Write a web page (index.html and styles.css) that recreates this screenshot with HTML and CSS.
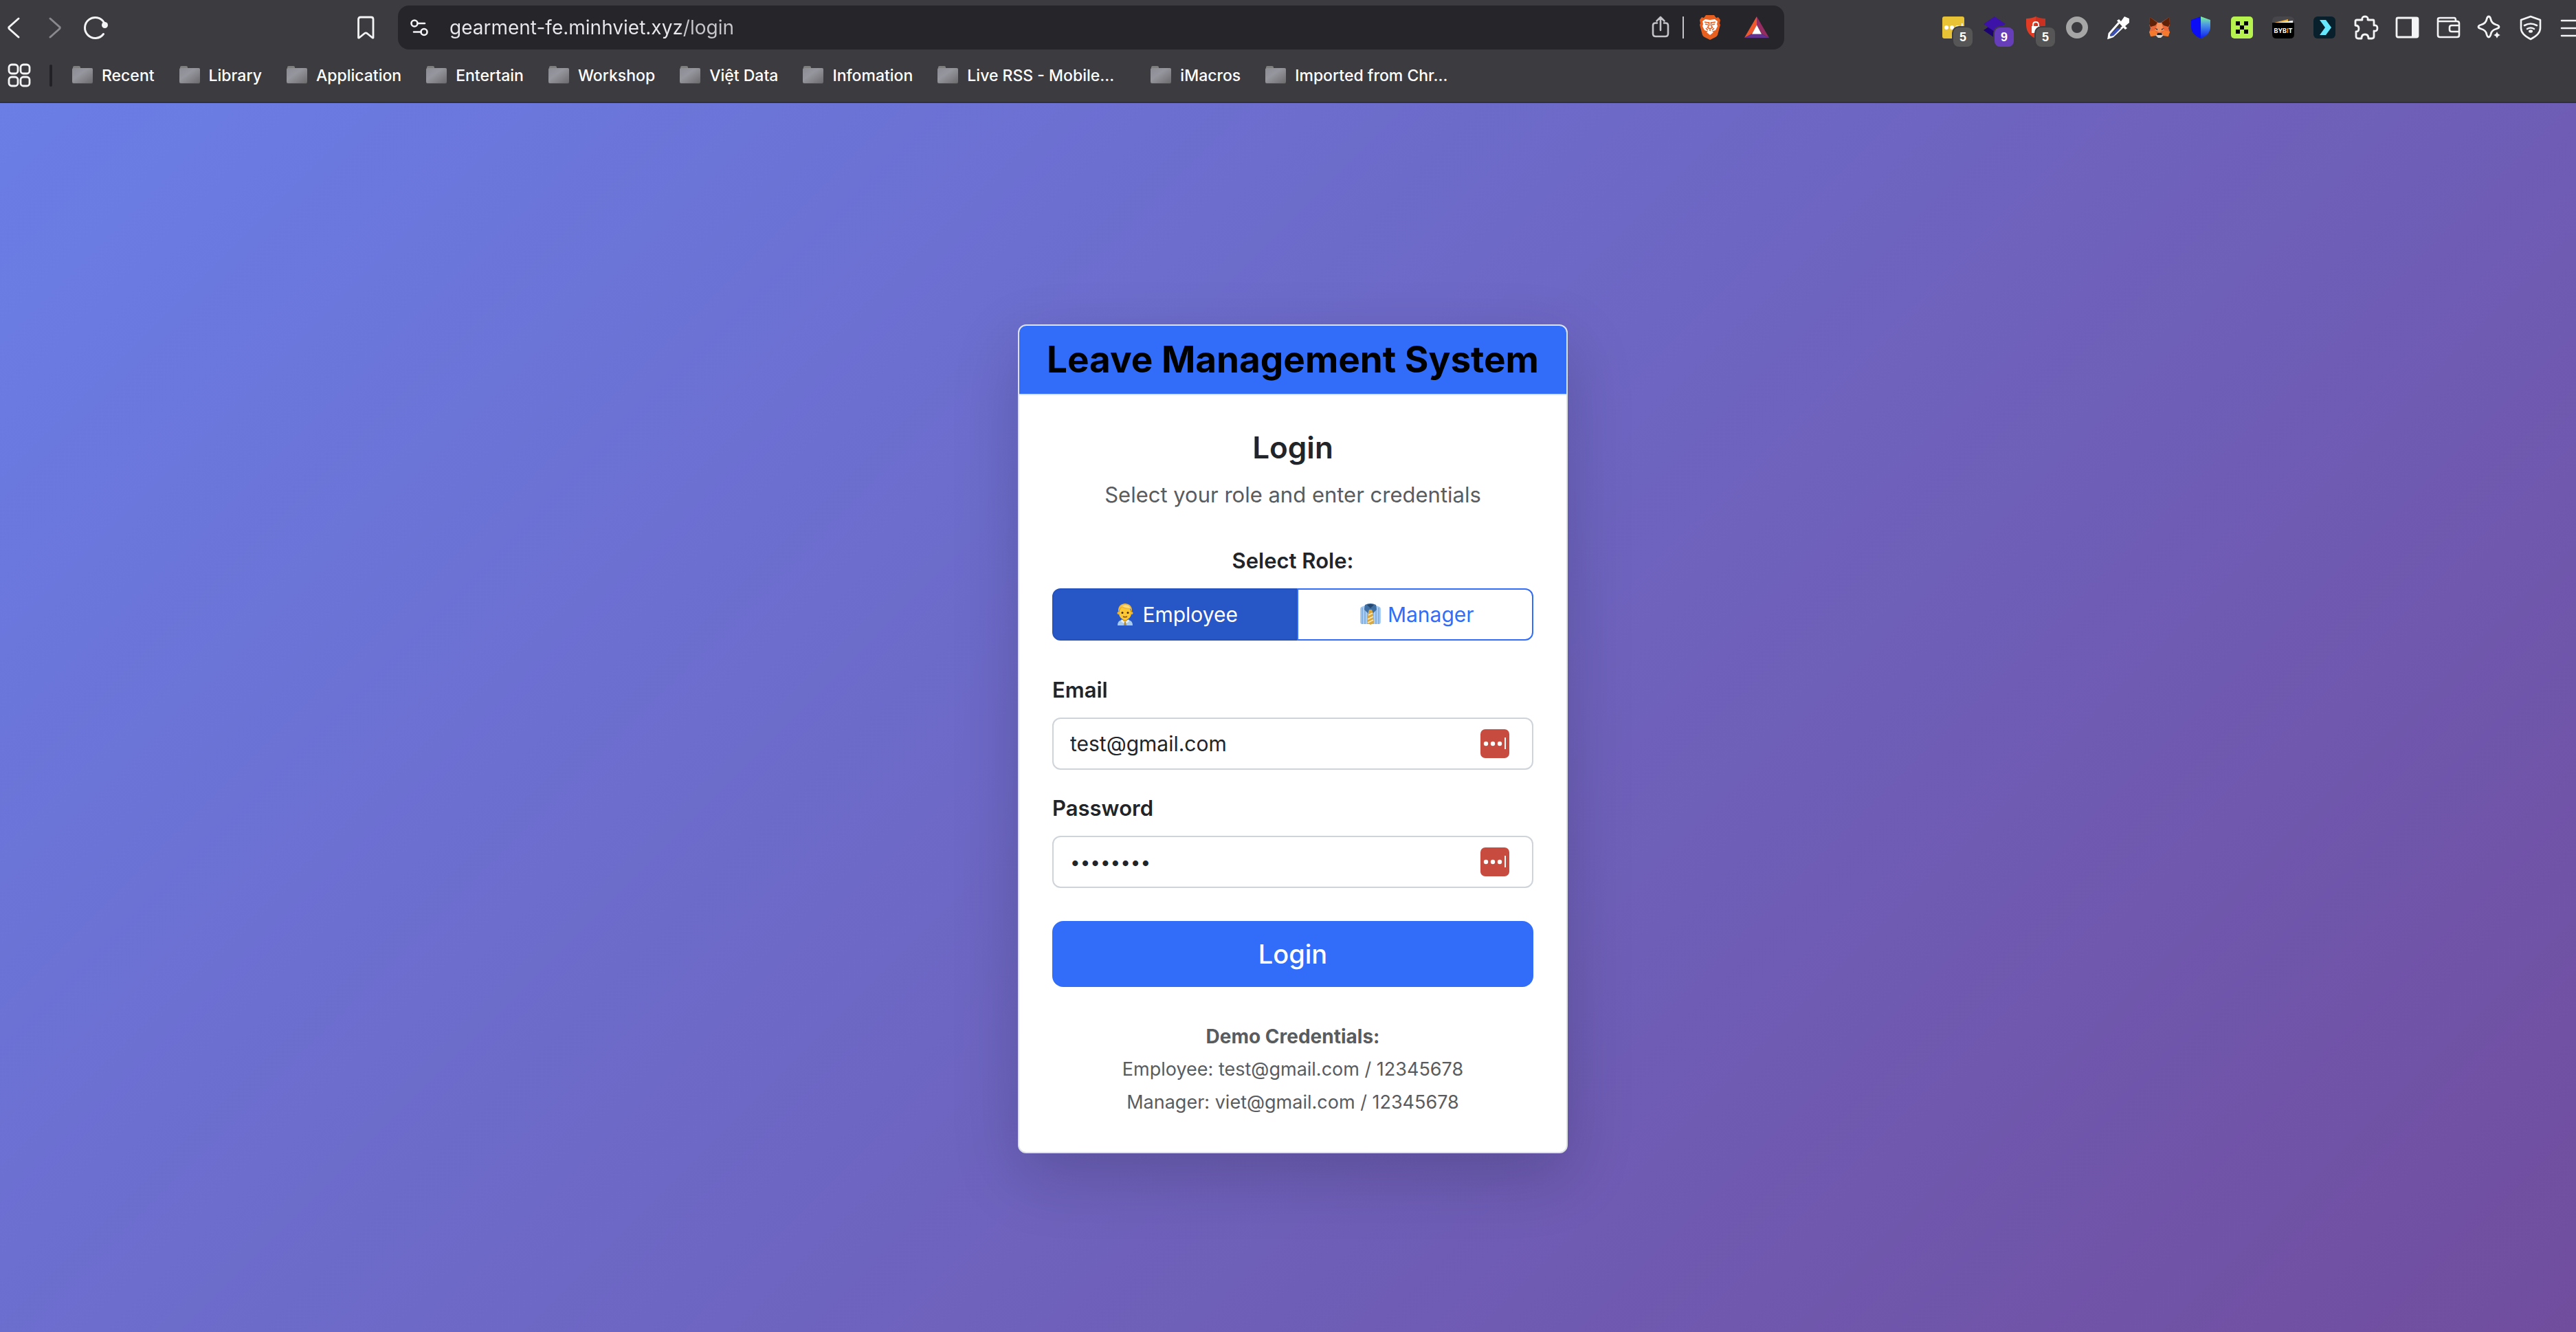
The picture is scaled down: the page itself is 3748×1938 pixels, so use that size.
FILE: index.html
```html
<!DOCTYPE html>
<html lang="en">
<head>
<meta charset="utf-8">
<title>Leave Management System</title>
<link rel="stylesheet" href="styles.css">
</head>
<body>
<svg class="defs" aria-hidden="true">
  <defs>
    <linearGradient id="folder-fill" x1="0" y1="0" x2="1" y2="1"><stop offset="0" stop-color="#8b8b93"/><stop offset=".4" stop-color="#96969e"/><stop offset="1" stop-color="#6c6c6e"/></linearGradient>
    <linearGradient id="shield-fill" x1="0" y1="0" x2="0" y2="1"><stop offset="0" stop-color="#7df59a"/><stop offset=".35" stop-color="#4f9ee0"/><stop offset="1" stop-color="#0a1cf5"/></linearGradient>
    <symbol id="folder" viewBox="0 0 30 30">
      <path d="M1 3q0-2 2-2h7q2 0 2 2v3H1z" fill="#7e7e7e"/>
      <rect y="4" width="30" height="23" rx="2" fill="#4f4f51"/>
      <rect y="4" width="30" height="22" rx="2" fill="url(#folder-fill)"/>
    </symbol>
    <symbol id="pass-fill" viewBox="0 0 42 42">
      <rect width="42" height="42" rx="7" fill="#c74b3e"/>
      <g fill="#fff"><circle cx="8" cy="21" r="3.2"/><circle cx="18" cy="21" r="3.2"/><circle cx="28" cy="21" r="3.2"/><rect x="35" y="12" width="2" height="17"/></g>
    </symbol>
  </defs>
</svg>

<header class="browser">
  <div class="toolbar">
    <nav class="nav" aria-label="Navigation">
      <button class="icon-button" type="button" aria-label="Back"><svg class="icon" viewBox="0 0 32 32"><path class="line" d="M23 3 9.500 15Q8 16 9.500 18L23 30" stroke-width="3"/></svg></button>
      <button class="icon-button dim" type="button" aria-label="Forward"><svg class="icon" viewBox="0 0 32 32"><path class="line" d="M9 3 22.500 15Q24 16 22.500 18L9 30" stroke-width="3"/></svg></button>
      <button class="icon-button" type="button" aria-label="Reload"><svg class="icon" viewBox="0 0 32 32"><path class="line" d="M26.500 25.500A15 15 0 1 1 27.500 9" stroke-width="3"/><circle cx="28.500" cy="12.500" r="4.500" fill="currentColor"/></svg></button>
    </nav>
    <button class="icon-button bookmark-button" type="button" aria-label="Bookmark this page"><svg class="icon" viewBox="0 0 32 32"><path class="line" d="M5.500 4Q5.500 1 8.500 1H24q3 0 3 3v27l-1 0-8-6.500q-1.800-1.300-3.500 0L6.500 31l-1 0z" stroke-width="2.800"/></svg></button>
    <div class="address">
      <button class="icon-button" type="button" aria-label="Site settings"><svg class="icon" viewBox="0 0 32 32"><g class="line" stroke-width="2.600"><circle cx="9" cy="10" r="4.500"/><path d="M13.500 10H24M8 22.500H18.500"/><circle cx="23" cy="22.500" r="4.500"/></g></svg></button>
      <input class="url" type="text" aria-label="Address" value="gearment-fe.minhviet.xyz/login">
      <button class="icon-button share" type="button" aria-label="Share"><svg class="icon" viewBox="0 0 32 32"><path class="line" d="M11 9.500H8.500q-3.500 0-3.500 3.500v12q0 4 4 4h14q4 0 4-4V13q0-3.500-3.500-3.500H21M16 20V1.500M10.500 6.500 16 1l5.500 5.500" stroke-width="2.600"/></svg></button>
      <span class="address-rule"></span>
      <button class="icon-button" type="button" aria-label="Brave Shields"><svg class="icon" viewBox="0 2 32 32">
        <path d="M10 0h12l3 4 3-1 3 4-1 5 1 2-4 15q-1 2-3 3l-8 4-8-4q-2-1-3-3L1 14l1-2-1-5 3-4 3 1z" fill="#e8601f"/>
        <path d="M5 9l4-3 7 1 7-1 4 3-1 4 1 3-3 6-3 1-5 2-5-2-3-1-3-6 1-3zM11 25l5-3 5 3-5 4z" fill="#fff"/>
        <path d="M8 10l6 1M24 10l-6 1M14.500 10v5l-2 3 3.500 2 3.500-2-2-3v-5M9 13l4 1M23 13l-4 1M16 20v3M10 19l3 3M22 19l-3 3" fill="none" stroke="#e8601f" stroke-width="1.600"/>
      </svg></button>
      <button class="icon-button rewards" type="button" aria-label="Brave Rewards"><svg class="icon" viewBox="0 0 32 32"><path d="M16 0-2 31 9 25 16 13z" fill="#f0582c"/><path d="M16 0 34 31 23 25 16 13z" fill="#952d63"/><path d="M-2 31H34L23 25H9z" fill="#61328f"/><path d="M16 12.500 9 25.500h14z" fill="#fff"/></svg></button>
    </div>
    <div class="extensions">
      <button class="icon-button" type="button" aria-label="Password manager"><svg class="icon" viewBox="0 0 32 32"><rect width="32" height="32" rx="3" fill="#e9c336"/><g fill="#fff"><circle cx="6" cy="16" r="3"/><circle cx="14" cy="16" r="3"/><circle cx="22" cy="16" r="3"/><rect x="28" y="10" width="1.500" height="12"/></g></svg><span class="badge">5</span></button>
      <button class="icon-button" type="button" aria-label="Layers"><svg class="icon" viewBox="0 0 32 32"><path d="M0 20 16 9 32 20 16 31z" fill="#1c0273"/><path d="M0 11 16 0 32 11 16 22z" fill="#3d12a8"/></svg><span class="badge violet">9</span></button>
      <button class="icon-button" type="button" aria-label="Privacy lock"><svg class="icon" viewBox="0 0 32 32"><path d="M2 3q8 0 14-3v32Q2 26 2 12z" fill="#e23b24"/><path d="M30 3q-8 0-14-3v32q14-6 14-20z" fill="#cb3120"/><rect x="10" y="14" width="12" height="10" fill="#fff"/><path d="M12 14v-2q0-4 4-4t4 4v2" fill="none" stroke="#fff" stroke-width="1.800"/></svg><span class="badge">5</span></button>
      <button class="icon-button" type="button" aria-label="Recorder"><svg class="icon" viewBox="0 0 32 32"><circle cx="16" cy="16" r="12" fill="none" stroke="#a6a6a6" stroke-width="8"/></svg></button>
      <button class="icon-button" type="button" aria-label="Colour picker"><svg class="icon" viewBox="0 0 32 32"><path d="M17 9 3 25l-1 6 6-2L23 15" fill="#3d3c40" stroke="#fff" stroke-width="3"/><path d="M14 17h6L9 28l-4 1-1-2z" fill="#3a50b8"/><path d="M14 6l3-2 3 3 5-7 7 3v6l-6 5 3 3-3 2z" fill="#fff"/></svg></button>
      <button class="icon-button" type="button" aria-label="Fox wallet"><svg class="icon" viewBox="0 0 32 32"><path d="M2 1 14 9h4L30 1l1 11-2 5 2 6-3 6-7-2-3 3h-4l-3-3-7 2-3-6 2-6-2-5z" fill="#e8683a"/><path d="M2 1 13 9 10 13 3 15 1 11zM30 1 19 9l3 4 7 2 2-4z" fill="#5e2209"/><path d="M13 9h6l2 8 2 3-7 3-7-3 2-3z" fill="#f5935f"/><path d="M1 22l8-2 3 4-1 4-8 1zM31 22l-8-2-3 4 1 4 8 1z" fill="#f57a2e"/><path d="M12 25h8l1 3-3 3h-4l-3-3z" fill="#d9d5d2"/><path d="M13 24h6l1 3h-8zM9 17l4 1v2zM23 17l-4 1v2z" fill="#26211f"/></svg></button>
      <button class="icon-button" type="button" aria-label="Shield wallet"><svg class="icon" viewBox="0 0 32 32"><path d="M16 0 2 5v10q0 11 14 17z" fill="#0b0df7"/><path d="M16 0 30 5v10q0 11-14 17z" fill="url(#shield-fill)"/></svg></button>
      <button class="icon-button" type="button" aria-label="Pixel wallet"><svg class="icon" viewBox="0 0 32 32"><rect width="32" height="32" rx="5" fill="#b7f34f"/><path d="M7 7h6v6H7zM19 7h6v6h-6zM13 13h6v6h-6zM7 19h6v6H7zM19 19h6v6h-6z" fill="#000"/></svg></button>
      <button class="icon-button" type="button" aria-label="Bybit wallet"><svg class="icon" viewBox="0 0 32 32"><rect width="32" height="32" rx="6" fill="#47474b"/><path d="M3 9 23 4v5z" fill="#f3b13a"/><path d="M8 9 30 6v4z" fill="#fff"/><path d="M0 9h32v17q0 6-6 6H6q-6 0-6-6z" fill="#000"/><text class="bybit" x="16" y="24" text-anchor="middle" fill="#fff">BYB<tspan fill="#f7a600">I</tspan>T</text></svg></button>
      <button class="icon-button" type="button" aria-label="Arrow wallet"><svg class="icon" viewBox="0 0 32 32"><rect width="32" height="32" rx="6" fill="#08202b"/><path d="M9 5h9l8 11-8 11H9l8-11z" fill="#66e9ff"/></svg></button>
      <button class="icon-button" type="button" aria-label="Extensions"><svg class="icon" viewBox="0 0 32 32"><path class="line" d="M3 5h8q-1-5 4-5t4 5h8q1 0 1 2v6q5-1 5 4t-5 4v8q0 3-3 3h-5q0-6-5-6t-5 6H5q-3 0-3-3v-7q4 0 4-4.500T1 13V7q0-2 2-2z" stroke-width="2.800"/></svg></button>
      <button class="icon-button" type="button" aria-label="Sidebar"><svg class="icon" viewBox="0 0 32 32"><rect class="line" x="1" y="2" width="31" height="28" rx="2" stroke-width="2.800"/><path d="M23 2h9v28h-9z" fill="currentColor"/></svg></button>
      <button class="icon-button" type="button" aria-label="Wallet"><svg class="icon" viewBox="0 0 32 32"><path class="line" d="M1 4v23q0 3 3 3h25q3 0 3-3V10q0-3-3-3H1V4q0-2 3-2h21q2 0 2 4M32 13H21q-3 0-3 3v3q0 3 3 3h11" stroke-width="2.600"/></svg></button>
      <button class="icon-button" type="button" aria-label="Assistant"><svg class="icon" viewBox="0 0 32 32"><path class="line" d="M15 0q2 0 3 4 1 6 8 8 4 1 4 3t-4 3q-7 2-8 8-1 4-3 4t-3-4q-1-6-8-8-4-1-4-3t4-3q7-2 8-8 1-4 3-4z" stroke-width="2.800"/><path d="M27 21q1 5 6 6-5 1-6 6-1-5-6-6 5-1 6-6z" fill="currentColor" stroke="#3c3b3f" stroke-width="1"/></svg></button>
      <button class="icon-button" type="button" aria-label="VPN"><svg class="icon" viewBox="0 0 32 32"><g class="line" stroke-width="2.600"><path d="M16 0 30 5v12q0 9-14 16Q2 26 2 17V5z"/><path d="M7 13q9-5 18 0M11 18q5-3 10 0"/></g><ellipse cx="16" cy="21.500" rx="3" ry="2.200" fill="currentColor"/></svg></button>
      <button class="icon-button" type="button" aria-label="Menu"><svg class="icon" viewBox="0 0 32 32"><path class="line" d="M1 6h31M1 17h31M1 28h31" stroke-width="2.600"/></svg></button>
    </div>
  </div>
  <nav class="bookmarks" aria-label="Bookmarks">
    <button class="icon-button" type="button" aria-label="Apps"><svg class="icon" viewBox="0 0 32 32"><g class="line" stroke-width="2.800"><rect x="1" y="0" width="13" height="13" rx="4"/><rect x="18" y="0" width="13" height="13" rx="4"/><rect x="1" y="18" width="13" height="13" rx="4"/><rect x="18" y="18" width="13" height="13" rx="4"/></g></svg></button>
    <span class="bookmark-rule"></span>
    <a class="bookmark" href="#"><svg class="folder"><use href="#folder"/></svg><span>Recent</span></a>
    <a class="bookmark" href="#"><svg class="folder"><use href="#folder"/></svg><span>Library</span></a>
    <a class="bookmark" href="#"><svg class="folder"><use href="#folder"/></svg><span>Application</span></a>
    <a class="bookmark" href="#"><svg class="folder"><use href="#folder"/></svg><span>Entertain</span></a>
    <a class="bookmark" href="#"><svg class="folder"><use href="#folder"/></svg><span>Workshop</span></a>
    <a class="bookmark" href="#"><svg class="folder"><use href="#folder"/></svg><span>Việt Data</span></a>
    <a class="bookmark" href="#"><svg class="folder"><use href="#folder"/></svg><span>Infomation</span></a>
    <a class="bookmark" href="#"><svg class="folder"><use href="#folder"/></svg><span class="long">Live RSS - Mobile…</span></a>
    <a class="bookmark" href="#"><svg class="folder"><use href="#folder"/></svg><span>iMacros</span></a>
    <a class="bookmark" href="#"><svg class="folder"><use href="#folder"/></svg><span class="long">Imported from Chr…</span></a>
  </nav>
</header>

<main class="page">
  <section class="card">
    <header class="card-header"><h1>Leave Management System</h1></header>
    <form class="card-body">
      <h2>Login</h2>
      <p class="lead">Select your role and enter credentials</p>
      <fieldset class="roles">
        <legend class="label">Select Role:</legend>
        <div class="role-group">
          <input class="role-input" type="radio" name="role" id="role-employee" checked>
          <label class="role" for="role-employee"><svg class="emoji" viewBox="0 0 40 32">
            <path d="M9 32q0-7 6-8h10q6 1 6 8z" fill="#a9cbea"/><path d="M15 23l5 4 5-4 1 3-4 3-2-2-2 2-4-3z" fill="#e3effa"/><path d="M19 27h2l1 5h-4z" fill="#b08a3c"/>
            <path d="M17 20h6v5l-3 2-3-2z" fill="#e0a11c"/><ellipse cx="20" cy="14" rx="9" ry="10" fill="#fcc935"/><circle cx="10.500" cy="14" r="2" fill="#f2b424"/><circle cx="29.500" cy="14" r="2" fill="#f2b424"/>
            <path d="M10 13Q9 1 20 0q11 1 10 13l-2-5q-8 1-13-2-3 2-5 7z" fill="#f0b63a"/><path d="M13 5q4-4 12-2l3 4q-8 0-12-3z" fill="#fbdc7c"/>
            <circle cx="16" cy="13.500" r="1.500" fill="#4a2c12"/><circle cx="24" cy="13.500" r="1.500" fill="#4a2c12"/><path d="M17 19q3 1.500 6 0" stroke="#8a4a12" stroke-width="1.500" fill="none"/>
          </svg>Employee</label>
          <input class="role-input" type="radio" name="role" id="role-manager">
          <label class="role" for="role-manager"><svg class="emoji" viewBox="0 0 40 32">
            <path d="M5 8q0-3 4-4l6-2h10l6 2q4 1 4 4v19q0 3-3 3H8q-3 0-3-3z" fill="#a9cdf3"/><path d="M8 6v24M12 4v26M28 4v26M32 6v24M16 12v18M24 12v18" stroke="#7ba9dd" stroke-width="1.500"/>
            <path d="M12 2q8-4 16 0l1 7-5 5-4-5-4 5-5-5z" fill="#3f6fa3"/><path d="M15 2q5-2 10 0l-5 5z" fill="#25466d"/>
            <path d="M18 9h4l1 3 2 16-5 3-5-3 2-16z" fill="#dba73a"/><path d="M17 17l6-3M16 23l8-4M16 28l8-4" stroke="#fbe9bd" stroke-width="1.800"/>
          </svg>Manager</label>
        </div>
      </fieldset>
      <div class="field">
        <label class="label" for="email">Email</label>
        <div class="control"><input class="input" type="email" id="email" value="test@gmail.com"><svg class="fill-icon"><use href="#pass-fill"/></svg></div>
      </div>
      <div class="field">
        <label class="label" for="password">Password</label>
        <div class="control"><input class="input password" type="password" id="password" value="12345678"><svg class="fill-icon"><use href="#pass-fill"/></svg></div>
      </div>
      <button class="submit" type="submit">Login</button>
      <p class="demo"><strong>Demo Credentials:</strong><span>Employee: test@gmail.com / 12345678</span><span>Manager: viet@gmail.com / 12345678</span></p>
    </form>
  </section>
</main>
</body>
</html>
```
FILE: styles.css
```css
* { box-sizing: border-box; }

html { overflow-x: hidden; }

body {
  margin: 0;
  min-height: 100vh;
  display: flex;
  flex-direction: column;
  overflow-x: hidden;
  font-family: Inter, "Noto Sans", sans-serif;
  color: #212529;
}

button, input { font-family: inherit; }

.defs { position: absolute; width: 0; height: 0; }

/* Browser chrome */
.browser {
  padding-top: 8px;
  background: #3c3b3f;
  border-bottom: 2px solid #313035;
  overflow: hidden;
}

.toolbar {
  display: flex;
  align-items: center;
  height: 64px;
  padding-left: 4px;
}

.nav { display: flex; gap: 28px; }

.icon-button {
  position: relative;
  flex: none;
  display: block;
  width: 32px;
  height: 32px;
  padding: 0;
  border: 0;
  background: none;
  color: #f4f4f6;
}

.dim { color: #8a898d; }

.icon {
  display: block;
  width: 32px;
  height: 32px;
  overflow: visible;
}

.line {
  fill: none;
  stroke: currentColor;
  stroke-linecap: round;
  stroke-linejoin: round;
}

.bookmark-button { margin: 0 31px 0 360px; }

.address {
  flex: 1;
  display: flex;
  align-items: center;
  height: 64px;
  padding: 0 24px 0 15px;
  border-radius: 16px;
  background: #26252a;
}

.url {
  flex: 1;
  min-width: 0;
  height: 64px;
  margin-left: 28px;
  padding: 0;
  border: 0;
  font-size: 28px;
  color: transparent;
  background: linear-gradient(90deg, #e9e9ed 336px, #c8c7cc 336px);
  background-clip: text;
}

.share { color: #c4c3c8; }

.address-rule {
  width: 2px;
  height: 32px;
  margin: 0 22px 0 16px;
  background: #c4c3c8;
}

.rewards { margin-left: 36px; }

.extensions {
  display: flex;
  gap: 28px;
  margin: 0 -10px 0 230px;
}

.badge {
  position: absolute;
  top: 16px;
  left: 16px;
  width: 28px;
  height: 28px;
  border-radius: 8px;
  background: #565656;
  box-shadow: 0 0 0 2px #3c3b3f;
  color: #fff;
  font: 700 18px/28px "Liberation Sans", sans-serif;
  text-align: center;
}

.violet { background: #673eb9; }

.bybit { font: 700 9px Inter, sans-serif; }

.bookmarks {
  display: flex;
  align-items: center;
  height: 76px;
  padding-left: 12px;
}

.bookmark-rule {
  width: 4px;
  height: 32px;
  margin: 0 29px 0 28px;
  border-radius: 2px;
  background: #222126;
}

.bookmark {
  display: flex;
  align-items: center;
  gap: 13px;
  margin-right: 36px;
  color: #fff;
  font-size: 23px;
  font-weight: 500;
  line-height: 32px;
  text-decoration: none;
  white-space: nowrap;
}

.folder { width: 30px; height: 30px; }

.long { width: 231px; overflow: hidden; }

/* Page */
.page {
  flex: 1;
  display: flex;
  align-items: center;
  justify-content: center;
  padding: 62px 0 0 14px;
  background: linear-gradient(135deg, #6a7ee6 0%, #714d9e 100%);
}

.card {
  width: 800px;
  max-width: 100%;
  border: 2px solid #dee2e6;
  border-radius: 12px;
  background: #fff;
  box-shadow: 0 32px 96px rgba(0, 0, 0, 0.175);
}

.card-header {
  padding: 16px 24px;
  border-bottom: 2px solid #dee2e6;
  border-radius: 10px 10px 0 0;
  background: #326df9;
  text-align: center;
}

h1, h2, p { margin: 0; }

h1 {
  font-size: 53px;
  line-height: 67px;
  font-weight: 700;
  color: #000;
  white-space: nowrap;
}

.card-body { padding: 48px; }

h2 {
  margin-bottom: 16px;
  font-size: 44px;
  line-height: 57px;
  font-weight: 600;
  text-align: center;
}

.lead {
  margin-bottom: 48px;
  font-size: 31px;
  line-height: 48px;
  text-align: center;
  color: #595c5f;
}

.label {
  display: block;
  margin-bottom: 16px;
  padding: 0;
  font-size: 31px;
  line-height: 48px;
  font-weight: 600;
}

.roles {
  min-width: 0;
  margin: 0 0 48px;
  padding: 0;
  border: 0;
}

.roles .label { width: 100%; text-align: center; }

.role-group { display: flex; }

.role-input {
  position: absolute;
  opacity: 0;
  pointer-events: none;
}

.role {
  flex: 1 1 auto;
  display: flex;
  align-items: center;
  justify-content: center;
  gap: 5px;
  height: 76px;
  border: 2px solid #326df9;
  border-radius: 0 12px 12px 0;
  font-size: 30px;
  color: #326df9;
}

.role:first-of-type { border-radius: 12px 0 0 12px; }

.role-input:checked + .role {
  border-color: #2552bb;
  background: #2757c7;
  color: #fff;
}

.emoji { width: 40px; height: 32px; }

.field { margin-bottom: 32px; }

.control { position: relative; }

.input {
  display: block;
  width: 100%;
  height: 76px;
  padding: 0 80px 0 24px;
  border: 2px solid #ced4da;
  border-radius: 12px;
  background: #fff;
  color: #212529;
  font-size: 30px;
}

.password { font-size: 26px; }

.fill-icon {
  position: absolute;
  top: 17px;
  right: 35px;
  width: 42px;
  height: 42px;
}

.submit {
  display: block;
  width: 100%;
  height: 96px;
  margin: 48px 0;
  border: 0;
  border-radius: 16px;
  background: #326df9;
  color: #fff;
  font-size: 38px;
  font-weight: 500;
}

.demo {
  display: flex;
  flex-direction: column;
  font-size: 27px;
  line-height: 48px;
  text-align: center;
  color: #595c5f;
}

.demo strong { font-size: 28px; }
```
